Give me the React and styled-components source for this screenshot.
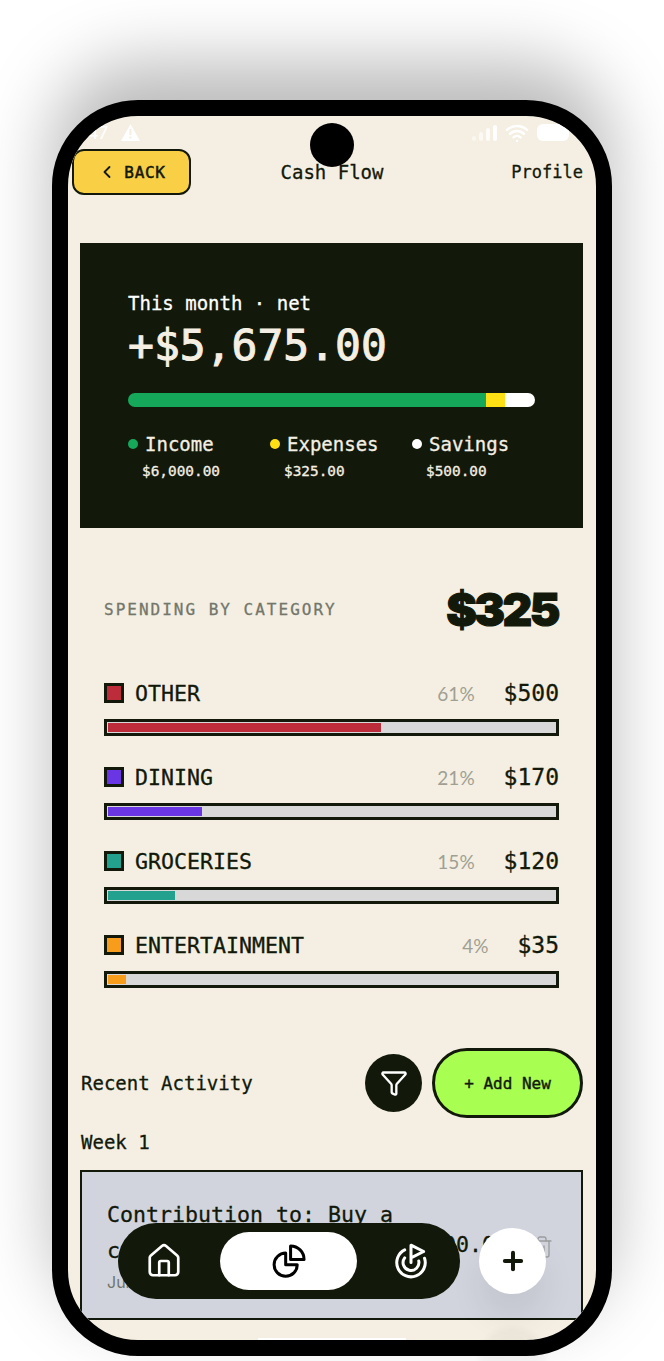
import React from "react";
import styled, { createGlobalStyle } from "styled-components";
import { ChevronLeft, Funnel, Goal, House, Plus, Trash2, Wifi } from "lucide-react";

const INK = "#12190a";
const CREAM = "#f4efe2";
const MONO = `"DejaVu Sans Mono", "Liberation Mono", monospace`;

const GlobalStyle = createGlobalStyle`
  html, body {
    margin: 0;
    background: #fff;
    overflow: hidden;
  }
  * {
    box-sizing: border-box;
  }
`;

const Page = styled.div`
  width: 664px;
  height: 1361px;
  padding: 100px 52px 5px;
  font-family: ${MONO};
  color: ${INK};
  -webkit-text-stroke: 0.3px currentColor;
`;

const Phone = styled.div`
  position: relative;
  width: 560px;
  height: 1256px;
  border: 16px solid #000;
  border-radius: 86px;
  background: ${CREAM};
  box-shadow: 0 -38px 70px rgba(0, 0, 0, 0.27);
`;

const Screen = styled.div`
  height: 100%;
  border-radius: 70px;
  overflow: hidden;
  display: flex;
  flex-direction: column;
`;

const Notch = styled.div`
  position: absolute;
  top: 7px;
  left: 242px;
  width: 44px;
  height: 44px;
  border-radius: 50%;
  background: #000;
  z-index: 3;
`;

const StatusBar = styled.div`
  height: 33px;
  flex-shrink: 0;
  padding: 0 27px 0 4px;
  display: flex;
  align-items: center;
  justify-content: space-between;
  color: #fff;
  font-family: "Inter", sans-serif;
  font-size: 17px;
  font-weight: 400;
  -webkit-text-stroke: 0;
`;

const StatusGroup = styled.div`
  display: flex;
  align-items: center;
  gap: ${(props) => props.$gap}px;
`;

const Header = styled.header`
  height: 45px;
  flex-shrink: 0;
  padding: 0 4px;
  display: grid;
  grid-template-columns: minmax(0, 1fr) auto minmax(0, 1fr);
  align-items: center;
`;

const BackButton = styled.button`
  width: 119px;
  height: 46px;
  border: 2.5px solid ${INK};
  border-radius: 12px;
  background: #f8cf45;
  color: ${INK};
  font-family: ${MONO};
  font-size: 16px;
  letter-spacing: 0.7px;
  display: flex;
  align-items: center;
  justify-content: center;
  gap: 7px;
  padding: 0;
  -webkit-text-stroke: 0.5px currentColor;
`;

const Title = styled.div`
  font-size: 19px;
`;

const ProfileLink = styled.div`
  justify-self: end;
  margin-right: 9px;
  font-size: 17px;
`;

const SummaryCard = styled.section`
  flex-shrink: 0;
  margin: 49px 13px 0 12px;
  height: 285px;
  background: ${INK};
  color: ${CREAM};
  padding: 48px 48px 0;
`;

const SummaryLabel = styled.div`
  font-size: 19px;
  line-height: 24px;
  color: #fff;
`;

const SummaryAmount = styled.div`
  font-size: 43px;
  line-height: 50px;
  margin-top: 5px;
  -webkit-text-stroke: 1px currentColor;
`;

const SplitBar = styled.div`
  height: 14px;
  margin-top: 23px;
  border-radius: 7px;
  overflow: hidden;
  display: flex;
`;

const SplitPart = styled.div`
  flex: ${(props) => props.$share} 0 0;
  background: ${(props) => props.$color};
`;

const Legend = styled.div`
  margin-top: 25px;
  display: grid;
  grid-template-columns: repeat(3, 142px);
`;

const LegendName = styled.div`
  display: flex;
  align-items: center;
  gap: 7px;
  font-size: 19px;
  line-height: 24px;
`;

const LegendDot = styled.span`
  width: 10px;
  height: 10px;
  border-radius: 50%;
  background: ${(props) => props.$color};
`;

const LegendValue = styled.div`
  margin: 6px 0 0 14px;
  font-size: 14.4px;
  line-height: 18px;
`;

const SpendHead = styled.div`
  flex-shrink: 0;
  margin: 50px 38px 0 36px;
  height: 62px;
  display: flex;
  align-items: center;
  justify-content: space-between;
`;

const SpendLabel = styled.div`
  font-size: 16px;
  letter-spacing: 2px;
  color: #73766b;
`;

const SpendTotal = styled.div`
  font-family: "Inter", sans-serif;
  font-size: 46px;
  font-weight: 900;
  letter-spacing: -2.5px;
  -webkit-text-stroke: 1.2px ${INK};
`;

const CategoryList = styled.div`
  flex-shrink: 0;
  margin: 38px 37px 0 36px;
  display: flex;
  flex-direction: column;
  gap: 26px;
`;

const CategoryRow = styled.div`
  display: flex;
  align-items: center;
  height: 30px;
`;

const Swatch = styled.span`
  width: 20px;
  height: 20px;
  border: 3px solid ${INK};
  background: ${(props) => props.$color};
  margin-right: 11px;
`;

const CategoryName = styled.div`
  flex: 1;
  font-size: 21.6px;
`;

const CategoryShare = styled.div`
  font-family: "Lato", sans-serif;
  font-size: 19px;
  color: #a09f94;
  margin-right: 29px;
  -webkit-text-stroke: 0;
`;

const CategoryAmount = styled.div`
  font-size: 23px;
`;

const Meter = styled.div`
  height: 17px;
  margin-top: 11px;
  border: 3px solid ${INK};
  background: #d8d8d8;
  padding: 1px;
`;

const MeterFill = styled.div`
  height: 100%;
  background: ${(props) => props.$color};
`;

const ActivityHead = styled.div`
  flex-shrink: 0;
  margin: 60px 13px 0 13px;
  height: 70px;
  display: flex;
  align-items: center;
  gap: 10px;
`;

const SectionTitle = styled.div`
  font-size: 19px;
  line-height: 24px;
  flex: 1;
`;

const FilterButton = styled.button`
  width: 57px;
  height: 58px;
  padding: 0;
  border: none;
  border-radius: 50%;
  background: ${INK};
  color: #fff;
  display: flex;
  align-items: center;
  justify-content: center;
`;

const AddButton = styled.button`
  width: 151px;
  height: 70px;
  padding: 0;
  border: 3px solid ${INK};
  border-radius: 35px;
  background: #a9fe52;
  color: ${INK};
  font-family: ${MONO};
  font-size: 16px;
  -webkit-text-stroke: 0.4px currentColor;
`;

const WeekTitle = styled(SectionTitle)`
  flex: none;
  margin: 12px 13px 0;
`;

const ActivityCard = styled.article`
  flex-shrink: 0;
  height: 150px;
  margin: 16px 13px 0 12px;
  border: 2.5px solid ${INK};
  background: #d1d4dd;
  padding: 25px 27px 0 25px;
  display: flex;
  align-items: center;
`;

const ActivityBody = styled.div`
  flex: 1;
  align-self: flex-start;
`;

const ActivityName = styled.div`
  font-size: 21.6px;
  line-height: 36px;
`;

const ActivityDate = styled.div`
  margin-top: 3px;
  font-family: "Inter", sans-serif;
  font-size: 16px;
  color: #73766b;
  -webkit-text-stroke: 0;
`;

const ActivityAmount = styled.div`
  font-size: 21.6px;
  margin: 0 22px 26px 0;
`;

const TrashIcon = styled(Trash2)`
  flex-shrink: 0;
  color: #9a9c9d;
  margin-bottom: 22px;
`;

const BottomNav = styled.nav`
  position: absolute;
  left: 50px;
  top: 1107px;
  width: 342px;
  height: 76px;
  border-radius: 38px;
  background: ${INK};
  color: #fff;
  display: flex;
  align-items: center;
  padding: 0 0 0 30px;
`;

const NavItem = styled.div`
  display: flex;
  align-items: center;
  justify-content: center;
  height: 58px;
  width: ${(props) => (props.$active ? "137px" : "32px")};
  margin-left: ${(props) => props.$gap}px;
  border-radius: 29px;
  background: ${(props) => (props.$active ? "#fff" : "transparent")};
  color: ${(props) => (props.$active ? "#000" : "#fff")};

  svg {
    flex-shrink: 0;
  }
`;

const Fab = styled.button`
  position: absolute;
  left: 411px;
  top: 1112px;
  width: 67px;
  height: 66px;
  padding: 0;
  border: none;
  border-radius: 50%;
  background: #fff;
  color: ${INK};
  display: flex;
  align-items: center;
  justify-content: center;
  box-shadow: 0 24px 34px rgba(0, 0, 0, 0.07), 0 99px 6px rgba(0, 0, 0, 0.03);
`;

const HomeBar = styled.div`
  position: absolute;
  left: 190px;
  bottom: 0;
  width: 148px;
  height: 2px;
  background: #fff;
`;

const Signal = styled.div`
  display: flex;
  align-items: flex-end;
  gap: 3px;
  height: 16px;
`;

const SignalBar = styled.span`
  width: 4px;
  height: ${(props) => props.$h}px;
  border-radius: 2px;
  background: #fff;
  opacity: ${(props) => props.$opacity};
`;

const Battery = styled.div`
  width: 32px;
  height: 17px;
  border-radius: 6px;
  background: #fff;
`;

const PieIcon = () => (
  <svg
    width="38"
    height="38"
    viewBox="0 0 24 24"
    fill="none"
    stroke="currentColor"
    strokeWidth="1.9"
    strokeLinejoin="round"
  >
    <path d="M9.9 7A7.3 7.3 0 1 0 17.2 14.3H9.9Z" />
    <path d="M13 2.5A8.5 8.5 0 0 1 21.5 11H13Z" />
  </svg>
);

const split = [
  { name: "Income", value: "$6,000.00", amount: 6000, color: "#16a85a" },
  { name: "Expenses", value: "$325.00", amount: 325, color: "#ffe014" },
  { name: "Savings", value: "$500.00", amount: 500, color: "#fff" },
];

const categories = [
  { name: "OTHER", share: 61, amount: "$500", color: "#bd2c3a" },
  { name: "DINING", share: 21, amount: "$170", color: "#6a35e3" },
  { name: "GROCERIES", share: 15, amount: "$120", color: "#22a18f" },
  { name: "ENTERTAINMENT", share: 4, amount: "$35", color: "#f89c1c" },
];

const App = () => {
  return (
    <Page>
      <GlobalStyle />
      <Phone>
        <Screen>
          <StatusBar>
            <StatusGroup $gap={13}>
              <span>9:47</span>
              <svg width="19" height="17" viewBox="0 0 19 17">
                <path d="M9.5 0 19 17H0z" fill="#fff" />
                <path d="M8.5 5h2v6h-2zM8.5 12.5h2v2h-2z" fill={CREAM} />
              </svg>
            </StatusGroup>
            <StatusGroup $gap={8}>
              <Signal>
                <SignalBar $h={5} $opacity={0.5} />
                <SignalBar $h={9} $opacity={0.6} />
                <SignalBar $h={13} $opacity={0.8} />
                <SignalBar $h={16} $opacity={1} />
              </Signal>
              <Wifi size={24} strokeWidth={2.5} />
              <Battery />
            </StatusGroup>
          </StatusBar>

          <Header>
            <BackButton>
              <ChevronLeft size={20} strokeWidth={2.2} />
              BACK
            </BackButton>
            <Title>Cash Flow</Title>
            <ProfileLink>Profile</ProfileLink>
          </Header>

          <SummaryCard>
            <SummaryLabel>This month · net</SummaryLabel>
            <SummaryAmount>+$5,675.00</SummaryAmount>
            <SplitBar>
              {split.map((part) => (
                <SplitPart
                  key={part.name}
                  $share={part.amount}
                  $color={part.color}
                />
              ))}
            </SplitBar>
            <Legend>
              {split.map((part) => (
                <div key={part.name}>
                  <LegendName>
                    <LegendDot $color={part.color} />
                    {part.name}
                  </LegendName>
                  <LegendValue>{part.value}</LegendValue>
                </div>
              ))}
            </Legend>
          </SummaryCard>

          <SpendHead>
            <SpendLabel>SPENDING BY CATEGORY</SpendLabel>
            <SpendTotal>$325</SpendTotal>
          </SpendHead>

          <CategoryList>
            {categories.map((cat) => (
              <div key={cat.name}>
                <CategoryRow>
                  <Swatch $color={cat.color} />
                  <CategoryName>{cat.name}</CategoryName>
                  <CategoryShare>{cat.share}%</CategoryShare>
                  <CategoryAmount>{cat.amount}</CategoryAmount>
                </CategoryRow>
                <Meter>
                  <MeterFill
                    $color={cat.color}
                    style={{ width: `${cat.share}%` }}
                  />
                </Meter>
              </div>
            ))}
          </CategoryList>

          <ActivityHead>
            <SectionTitle>Recent Activity</SectionTitle>
            <FilterButton>
              <Funnel size={28} strokeWidth={2} />
            </FilterButton>
            <AddButton>+ Add New</AddButton>
          </ActivityHead>
          <WeekTitle>Week 1</WeekTitle>
          <ActivityCard>
            <ActivityBody>
              <ActivityName>Contribution to: Buy a car</ActivityName>
              <ActivityDate>Jun 1</ActivityDate>
            </ActivityBody>
            <ActivityAmount>$500.00</ActivityAmount>
            <TrashIcon size={24} strokeWidth={1.3} />
          </ActivityCard>
        </Screen>

        <Notch />
        <BottomNav>
          <NavItem>
            <House size={38} strokeWidth={1.7} />
          </NavItem>
          <NavItem $active $gap={40}>
            <PieIcon />
          </NavItem>
          <NavItem $gap={38}>
            <Goal size={38} strokeWidth={1.9} />
          </NavItem>
        </BottomNav>
        <Fab>
          <Plus size={28} strokeWidth={3.4} />
        </Fab>
        <HomeBar />
      </Phone>
    </Page>
  );
};

export default App;
